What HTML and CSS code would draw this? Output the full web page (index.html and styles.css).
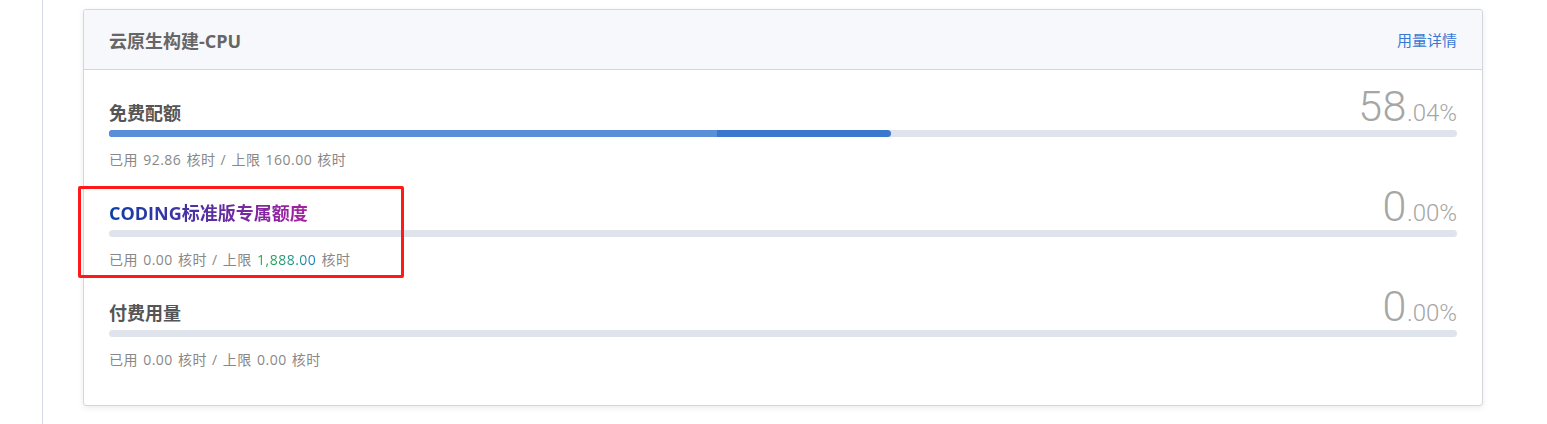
FILE: index.html
```html
<!DOCTYPE html>
<html lang="zh-CN">
<head>
    <meta charset="UTF-8">
    <meta name="viewport" content="width=device-width, initial-scale=1.0">
    <title>云原生构建-CPU</title>
    <link rel="stylesheet" href="styles.css">
</head>
<body>
    <div class="page">
        <div class="side"></div>

        <div class="main">
            <div class="card">
                <div class="card-header">
                    <span class="card-title">云原生构建-CPU</span>
                    <a class="card-link" href="#">用量详情</a>
                </div>

                <div class="card-body">
                    <div class="quota">
                        <div class="quota-head">
                            <span class="quota-name">免费配额</span>
                            <span class="quota-percent"><span class="int">58</span><span class="dec">.04%</span></span>
                        </div>
                        <div class="bar">
                            <div class="bar-fill" style="width: 58.04%">
                                <div class="bar-part" style="width: 77.7%"></div>
                            </div>
                        </div>
                        <div class="quota-info">已用 92.86 核时 / 上限 160.00 核时</div>
                    </div>

                    <div class="quota highlight">
                        <div class="quota-head">
                            <span class="quota-name special">CODING标准版专属额度</span>
                            <span class="quota-percent"><span class="int">0</span><span class="dec">.00%</span></span>
                        </div>
                        <div class="bar"></div>
                        <div class="quota-info">已用 0.00 核时 / 上限 <span class="limit">1,888.00</span> 核时</div>
                    </div>

                    <div class="quota">
                        <div class="quota-head">
                            <span class="quota-name">付费用量</span>
                            <span class="quota-percent"><span class="int">0</span><span class="dec">.00%</span></span>
                        </div>
                        <div class="bar"></div>
                        <div class="quota-info">已用 0.00 核时 / 上限 0.00 核时</div>
                    </div>
                </div>
            </div>
        </div>
    </div>
</body>
</html>
```

FILE: styles.css
```css
body {
    margin: 0;
    padding: 0;
    background-color: #fff;
    font-family: 'Open Sans', 'Noto Sans CJK SC', sans-serif;
    color: #555;
}

.page {
    display: flex;
    min-height: 424px;
}

.side {
    width: 42px;
    border-right: 1px solid #d5d9e6;
    flex-shrink: 0;
}

.main {
    padding: 9px 0 0 40px;
}

.card {
    width: 1398px;
    border: 1px solid #d3d6df;
    border-radius: 3px;
    background-color: #fff;
    box-shadow: 0 2px 6px rgba(0, 0, 0, 0.08);
}

.card-header {
    height: 59px;
    display: flex;
    align-items: center;
    justify-content: space-between;
    padding: 0 25px;
    background-color: #f7f8fb;
    border-bottom: 1px solid #d3d6df;
    border-radius: 3px 3px 0 0;
}

.card-title {
    font-size: 18px;
    font-weight: bold;
    color: #666;
}

.card-link {
    font-size: 15px;
    color: #3a78d6;
    text-decoration: none;
}

.card-body {
    padding: 20px 25px 35px;
}

.quota {
    position: relative;
    margin-bottom: 20px;
}

.quota:last-child {
    margin-bottom: 0;
}

.quota-head {
    height: 40px;
    display: flex;
    align-items: flex-end;
    justify-content: space-between;
}

.quota-name {
    font-size: 18px;
    line-height: 24px;
    margin-bottom: 5px;
    font-weight: bold;
    color: #555;
}

.quota-name.special {
    background: linear-gradient(90deg, #0a3ea6, #a8209f);
    -webkit-background-clip: text;
    background-clip: text;
    color: transparent;
}

.quota-percent {
    font-family: 'Roboto', sans-serif;
    font-weight: 300;
    color: #a6a6a6;
    line-height: 29px;
}

.quota-percent .int {
    font-size: 43px;
    letter-spacing: 0.5px;
}

.quota-percent .dec {
    font-size: 24px;
}

.bar {
    height: 7px;
    border-radius: 4px;
    background-color: #dfe3ec;
    overflow: hidden;
}

.bar-fill {
    height: 100%;
    background-color: #3a77cf;
    border-radius: 0 4px 4px 0;
}

.bar-part {
    height: 100%;
    background-color: #5b8fd7;
}

.quota-info {
    margin-top: 13px;
    font-size: 14px;
    line-height: 20px;
    letter-spacing: 0.5px;
    word-spacing: 1px;
    color: #888;
}

.limit {
    background: linear-gradient(90deg, #1fad2e, #1a7fc0);
    -webkit-background-clip: text;
    background-clip: text;
    color: transparent;
}

.highlight::after {
    content: '';
    position: absolute;
    left: -31px;
    top: -4px;
    width: 320px;
    height: 86px;
    border: 3px solid #ff1a1a;
    border-radius: 2px;
}
```
